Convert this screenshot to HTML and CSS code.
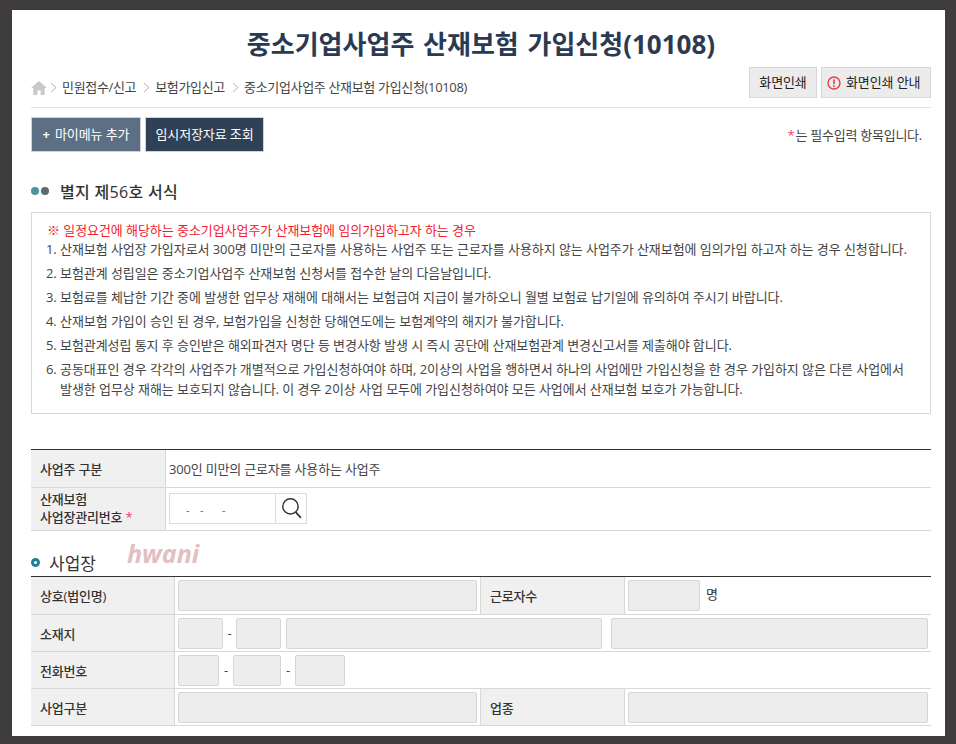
FILE: index.html
```html
<!DOCTYPE html>
<html lang="ko">
<head>
<meta charset="utf-8">
<title>중소기업사업주 산재보험 가입신청</title>
<link rel="stylesheet" href="styles.css">
</head>
<body>
<main class="panel">
  <h1 class="title">중소기업사업주 산재보험 가입신청(10108)</h1>
  <div class="crumbbar">
    <nav class="crumbs">
      <svg class="home" width="16" height="14" viewBox="0 0 16 14"><path d="M8 0 L16 7 H13.6 V14 H9.6 V9.5 H6.4 V14 H2.4 V7 H0 Z" fill="#c9c9c9"/></svg>
      <svg class="chev" width="7" height="11" viewBox="0 0 7 11"><path d="M1 1 L6 5.5 L1 10" fill="none" stroke="#b5b5b5"/></svg>
      <span>민원접수/신고</span>
      <svg class="chev" width="7" height="11" viewBox="0 0 7 11"><path d="M1 1 L6 5.5 L1 10" fill="none" stroke="#b5b5b5"/></svg>
      <span>보험가입신고</span>
      <svg class="chev" width="7" height="11" viewBox="0 0 7 11"><path d="M1 1 L6 5.5 L1 10" fill="none" stroke="#b5b5b5"/></svg>
      <span>중소기업사업주 산재보험 가입신청(10108)</span>
    </nav>
    <div class="printbtns">
      <button class="gbtn print">화면인쇄</button>
      <button class="gbtn guide">
        <svg width="14" height="14" viewBox="0 0 14 14"><circle cx="7" cy="7" r="6" fill="none" stroke="#ee3b42" stroke-width="1.4"/><path d="M7 3.2 V8" stroke="#ee3b42" stroke-width="1.6"/><circle cx="7" cy="10" r="0.9" fill="#ee3b42"/></svg>
        화면인쇄 안내
      </button>
    </div>
  </div>
  <div class="actions">
    <button class="abtn my"><b class="plus">+</b>마이메뉴 추가</button>
    <button class="abtn temp">임시저장자료 조회</button>
    <p class="reqnote"><i class="star">*</i>는 필수입력 항목입니다.</p>
  </div>
  <h2 class="formhead"><span class="dot d1"></span><span class="dot d2"></span><span class="formtext">별지 제56호 서식</span></h2>
  <section class="notice">
    <p class="warn">※ 일정요건에 해당하는 중소기업사업주가 산재보험에 임의가입하고자 하는 경우</p>
    <ol class="rules">
      <li>산재보험 사업장 가입자로서 300명 미만의 근로자를 사용하는 사업주 또는 근로자를 사용하지 않는 사업주가 산재보험에 임의가입 하고자 하는 경우 신청합니다.</li>
      <li>보험관계 성립일은 중소기업사업주 산재보험 신청서를 접수한 날의 다음날입니다.</li>
      <li>보험료를 체납한 기간 중에 발생한 업무상 재해에 대해서는 보험급여 지급이 불가하오니 월별 보험료 납기일에 유의하여 주시기 바랍니다.</li>
      <li>산재보험 가입이 승인 된 경우, 보험가입을 신청한 당해연도에는 보험계약의 해지가 불가합니다.</li>
      <li>보험관계성립 통지 후 승인받은 해외파견자 명단 등 변경사항 발생 시 즉시 공단에 산재보험관계 변경신고서를 제출해야 합니다.</li>
      <li>공동대표인 경우 각각의 사업주가 개별적으로 가입신청하여야 하며, 2이상의 사업을 행하면서 하나의 사업에만 가입신청을 한 경우 가입하지 않은 다른 사업에서 발생한 업무상 재해는 보호되지 않습니다. 이 경우 2이상 사업 모두에 가입신청하여야 모든 사업에서 산재보험 보호가 가능합니다.</li>
    </ol>
  </section>
  <div class="tbl owner">
    <div class="th r1">사업주 구분</div>
    <div class="td r1 plain">300인 미만의 근로자를 사용하는 사업주</div>
    <div class="th r2">산재보험<br>사업장관리번호 <i class="star">*</i></div>
    <div class="td r2">
      <div class="mgmt"><span class="dash d14">-</span><span class="dash d22">-</span><span class="dash">-</span></div>
      <div class="search"><svg width="21" height="23" viewBox="0 0 20 22"><circle cx="9" cy="9" r="7.3" fill="none" stroke="#333" stroke-width="1.4"/><path d="M14 14.5 L19 20" stroke="#333" stroke-width="1.6"/></svg></div>
    </div>
  </div>
  <div class="subhead">
    <span class="ring"></span><h3 class="subtext">사업장</h3><span class="wm">hwani</span>
  </div>
  <div class="tbl biz">
    <div class="th">상호(법인명)</div>
    <div class="td"><span class="f grow"></span></div>
    <div class="th mid">근로자수</div>
    <div class="td"><span class="f w72"></span><span class="unit">명</span></div>
    <div class="th">소재지</div>
    <div class="td span3">
      <span class="f w45"></span><span class="sep s1">-</span><span class="f w45"></span><span class="f a3"></span><span class="f a4"></span>
    </div>
    <div class="th">전화번호</div>
    <div class="td span3">
      <span class="f w41"></span><span class="sep s2">-</span><span class="f w48"></span><span class="sep s2">-</span><span class="f w50"></span>
    </div>
    <div class="th">사업구분</div>
    <div class="td"><span class="f grow"></span></div>
    <div class="th mid">업종</div>
    <div class="td"><span class="f grow"></span></div>
  </div>
</main>
</body>
</html>
```
FILE: styles.css
```css
* { box-sizing: border-box; }
html, body { margin: 0; height: 100%; }
body {
  background: #3e3c3d;
  padding: 10px 11px 8px 12px;
  overflow: hidden;
  font-family: "Open Sans", "Noto Sans CJK KR", sans-serif;
  font-size: 13px;
  color: #333;
}
.panel {
  background: #fff;
  height: 726px;
  padding: 0 14px 0 19px;
  overflow: hidden;
}
.title {
  margin: 0;
  height: 57px;
  padding-top: 15px;
  font-size: 26px;
  word-spacing: 2px;
  line-height: 38px;
  font-weight: 700;
  text-align: center;
  color: #2a3a52;
  white-space: nowrap;
}
.crumbbar {
  display: flex;
  justify-content: space-between;
  height: 41px;
  border-bottom: 1px solid #e4e4e4;
}
.crumbs {
  display: flex;
  align-items: center;
  height: 40px;
  color: #444;
  font-size: 13px;
  letter-spacing: -0.33px;
  white-space: nowrap;
}
.crumbs .home { margin-top: 1px; }
.crumbs .chev { margin: 0 5px 0 3px; }
.crumbs span { margin-right: 4px; margin-top: -1px; }
.printbtns { display: flex; gap: 4px; }
.gbtn {
  height: 31px;
  margin: 0;
  padding: 0;
  border: 1px solid #d6d6d6;
  background: #ececec;
  color: #222;
  font: 13px/1 "Open Sans", "Noto Sans CJK KR", sans-serif;
  letter-spacing: -0.1px;
  display: flex;
  align-items: center;
  justify-content: center;
  gap: 5px;
}
.print { width: 68px; }
.guide { width: 110px; justify-content: flex-start; padding-left: 5px; }
.actions {
  display: flex;
  align-items: center;
  gap: 4px;
  height: 35px;
  margin-top: 9px;
}
.abtn {
  height: 35px;
  border: 1px solid #cfd3d8;
  color: #fff;
  font: 13px/1 "Open Sans", "Noto Sans CJK KR", sans-serif;
  letter-spacing: -0.1px;
  padding: 0;
}
.my { width: 110px; background: #5d6f84; }
.plus { margin-right: 5px; font-weight: 700; }
.temp { width: 119px; background: #2f4156; }
.reqnote {
  margin: 0 9px 0 auto;
  color: #444;
  font-size: 13px;
  letter-spacing: -0.25px;
}
.star { color: #ef4060; font-style: normal; font-size: 13px; margin-right: 1px; }
.formhead {
  display: flex;
  align-items: center;
  margin: 26px 0 0;
  height: 26px;
  font-size: 16px;
  font-weight: 500;
  letter-spacing: 0.3px;
  color: #333;
}
.dot { width: 8px; height: 8px; border-radius: 50%; margin-right: 2px; }
.d1 { background: #4f939e; }
.d2 { background: #5a6a72; }
.formtext { margin-left: 9px; }
.notice {
  margin-top: 8px;
  height: 202px;
  border: 1px solid #d8d8d8;
  padding: 8px 15px 0;
  font-size: 13px;
  letter-spacing: -0.06px;
  color: #444;
}
.warn { margin: 0; line-height: 18px; color: #f5222d; }
.rules {
  margin: 0;
  padding: 0 0 0 13px;
  line-height: 20px;
}
.rules li { margin-bottom: 4px; }
.tbl {
  display: grid;
  border-top: 1px solid #333;
  font-size: 13px;
}
.th {
  background: #f0f0f0;
  border-bottom: 1px solid #d8d8d8;
  border-right: 1px solid #d8d8d8;
  font-weight: 500;
  padding-left: 9px;
  display: flex;
  align-items: center;
  color: #333;
  letter-spacing: -0.2px;
}
.td {
  border-bottom: 1px solid #d8d8d8;
  display: flex;
  align-items: center;
  padding-left: 3px;
  min-width: 0;
}
.owner {
  margin-top: 35px;
  grid-template-columns: 135px 1fr;
  grid-template-rows: 38px 43px;
}
.owner .th.r2 { display: block; line-height: 18px; padding-top: 2px; }
.plain { letter-spacing: -0.18px; color: #444; }
.mgmt {
  display: flex;
  width: 107px;
  height: 31px;
  margin-top: -1px;
  border: 1px solid #dcdcdc;
  padding-left: 16px;
  line-height: 31px;
  font-size: 11px;
  color: #666;
}
.dash { display: block; }
.d14 { width: 14px; }
.d22 { width: 22px; }
.search {
  width: 31px;
  height: 31px;
  margin-top: -1px;
  border: 1px solid #dcdcdc;
  border-left: 0;
  display: flex;
  align-items: center;
  justify-content: center;
}
.subhead {
  display: flex;
  align-items: center;
  height: 45px;
  padding-top: 18px;
  position: relative;
}
.ring {
  width: 9px;
  height: 9px;
  border: 3px solid #1e7f98;
  border-radius: 50%;
  margin-right: 9px;
}
.subtext { margin: 0; font-size: 17px; font-weight: 400; color: #333; }
.wm {
  position: absolute;
  left: 96px;
  top: 9px;
  font: italic 700 25px/26px "Open Sans", sans-serif;
  color: #e2c0c2;
}
.biz {
  grid-template-columns: 144px 305px 145px 1fr;
  grid-template-rows: 38px 37px 37px 37px;
}
.biz .th { padding-left: 9px; }
.biz .mid { border-left: 1px solid #d8d8d8; }
.span3 { grid-column: span 3; }
.f {
  display: block;
  flex: none;
  height: 31px;
  background: #ededed;
  border: 1px solid #d6d6d6;
  border-radius: 2px;
}
.grow { flex: 1; margin-right: 3px; }
.w72 { width: 72px; }
.w45 { width: 45px; }
.w41 { width: 41px; }
.w48 { width: 48px; }
.w50 { width: 50px; }
.a3 { width: 316px; margin-left: 5px; }
.a4 { width: 317px; margin-left: 9px; }
.sep { color: #444; text-align: center; flex: none; }
.s1 { width: 13px; }
.s2 { width: 14px; }
.unit { margin-left: 6px; margin-top: -5px; color: #333; }
```
